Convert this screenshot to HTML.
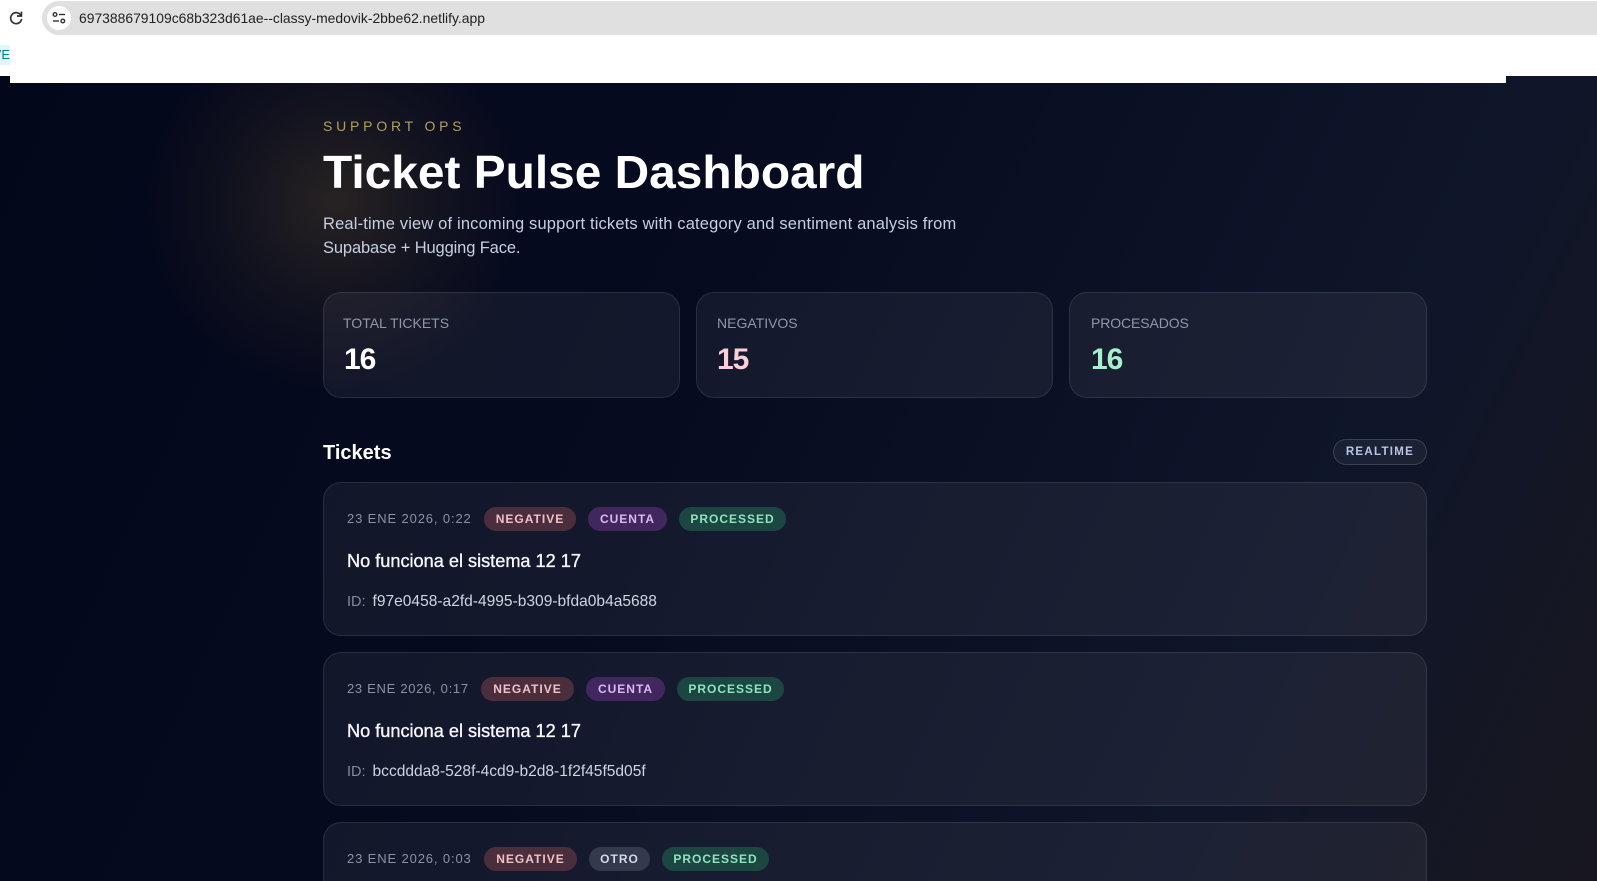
<!DOCTYPE html>
<html><head><meta charset="utf-8"><style>
*{box-sizing:border-box;margin:0;padding:0}
html,body{width:1597px;height:881px;overflow:hidden;background:#fff}
body{position:relative;font-family:"Liberation Sans",sans-serif}
.a{position:absolute;white-space:nowrap}
#bg{position:absolute;left:0;top:76px;width:1597px;height:805px;overflow:hidden;background:radial-gradient(circle at 335px 125px,rgba(250,190,70,.14),rgba(250,190,70,.055) 100px,rgba(250,190,70,0) 190px),linear-gradient(115deg,#03071a 0%,#070b20 42%,#0f162a 78%,#18171f 100%)}
.card{position:absolute;border:1px solid rgba(148,163,184,.17);border-radius:18px;background:rgba(255,255,255,.056)}
.lab{font-size:14px;color:#8f97aa;line-height:18px;left:19px;top:21px}
.num{font-size:30px;font-weight:bold;letter-spacing:-1px;line-height:36px;left:20px;top:49px}
.date{font-size:13px;letter-spacing:.87px;color:#8b92a6;line-height:16px;top:28px;left:23px}
.pill{position:absolute;top:24px;height:24px;border-radius:12px;font-size:12px;font-weight:bold;letter-spacing:1px;line-height:24px;text-align:center;white-space:nowrap}
.neg{background:#4a2e3c;color:#f1c0c8}.cue{background:#42275f;color:#dcb8f2}.pro{background:#1c4642;color:#8fe3bd}.otr{background:#343a4e;color:#d4d9e4}
.tt{left:23px;top:67px;font-size:18.15px;line-height:22px;color:#f5f7fb;-webkit-text-stroke:.35px #f5f7fb}
.id{left:23px;top:110px;font-size:15.55px;line-height:18px;color:#d0d5e0}
.id span{color:#838b9e;font-size:14.5px;margin-right:7px}
</style></head><body>
<div class="a" style="left:42px;top:1px;width:1555px;height:34px;background:#e0e0e0;border-radius:17px 0 0 17px"></div>
<svg class="a" style="left:8px;top:10px" width="16" height="16" viewBox="0 0 16 16" fill="none" stroke="#333" stroke-width="1.7"><path d="M12.8 5.2A5.5 5.5 0 1 0 13.6 9"/><path d="M13.4 1.6V6H9"/></svg>
<div class="a" style="left:47px;top:6px;width:24px;height:24px;border-radius:12px;background:#fff"></div>
<svg class="a" style="left:52px;top:11px" width="14" height="14" viewBox="0 0 14 14" fill="none" stroke="#333" stroke-width="1.4"><circle cx="3" cy="3.5" r="1.8"/><path d="M7 3.5H13"/><circle cx="10.8" cy="10" r="1.8"/><path d="M1 10H7"/></svg>
<div class="a" style="left:79px;top:9px;font-size:13.9px;line-height:18px;color:#222">697388679109c68b323d61ae--classy-medovik-2bbe62.netlify.app</div>

<div id="bg"></div>
<div class="a" style="left:10px;top:35px;width:1496px;height:48px;background:#fff"></div>
<div class="a" style="left:0;top:35px;width:1597px;height:41px;background:#fff"></div>
<div class="a" style="left:0;top:45px;width:10px;height:20px;background:#e0f7fa;color:#00838f;font-size:13px;line-height:20px;overflow:hidden"><span style="position:absolute;right:0">VE</span></div>

<div class="a" style="left:323px;top:117px;font-size:14px;letter-spacing:3.8px;line-height:18px;color:#b39f5c">SUPPORT OPS</div>
<div class="a" style="left:323px;top:145px;font-size:46px;font-weight:bold;line-height:54px;color:#fff;transform:scaleX(1.04);transform-origin:0 50%">Ticket Pulse Dashboard</div>
<div class="a" style="left:323px;top:212px;font-size:16.5px;line-height:24px;color:#c5cfe2"><span style="letter-spacing:.16px">Real-time view of incoming support tickets with category and sentiment analysis from</span><br><span style="letter-spacing:-.13px">Supabase + Hugging Face.</span></div>

<div class="card" style="left:323px;top:292px;width:357px;height:106px"><div class="a lab">TOTAL TICKETS</div><div class="a num" style="color:#fff">16</div></div>
<div class="card" style="left:696px;top:292px;width:357px;height:106px"><div class="a lab" style="left:20px">NEGATIVOS</div><div class="a num" style="color:#fbcfd6">15</div></div>
<div class="card" style="left:1069px;top:292px;width:358px;height:106px"><div class="a lab" style="left:21px;letter-spacing:-.1px">PROCESADOS</div><div class="a num" style="left:21px;color:#a7f0cc">16</div></div>

<div class="a" style="left:323px;top:440px;font-size:20px;font-weight:bold;line-height:26px;color:#fff">Tickets</div>
<div class="a" style="left:1333px;top:439px;width:94px;height:26px;border:1px solid rgba(148,163,184,.25);border-radius:13px;background:rgba(255,255,255,.05);font-size:11.5px;font-weight:bold;letter-spacing:1.3px;line-height:25px;text-align:center;color:#b4c8e6">REALTIME</div>

<div class="card" style="left:323px;top:482px;width:1104px;height:154px">
<div class="a date">23 ENE 2026, 0:22</div>
<div class="pill neg" style="left:160px;width:92px">NEGATIVE</div>
<div class="pill cue" style="left:264px;width:79px">CUENTA</div>
<div class="pill pro" style="left:355px;width:107px">PROCESSED</div>
<div class="a tt">No funciona el sistema 12 17</div>
<div class="a id"><span>ID:</span>f97e0458-a2fd-4995-b309-bfda0b4a5688</div>
</div>
<div class="card" style="left:323px;top:652px;width:1104px;height:154px">
<div class="a date" style="letter-spacing:.7px">23 ENE 2026, 0:17</div>
<div class="pill neg" style="left:157px;width:93px">NEGATIVE</div>
<div class="pill cue" style="left:262px;width:79px">CUENTA</div>
<div class="pill pro" style="left:353px;width:107px">PROCESSED</div>
<div class="a tt">No funciona el sistema 12 17</div>
<div class="a id"><span>ID:</span>bccddda8-528f-4cd9-b2d8-1f2f45f5d05f</div>
</div>
<div class="card" style="left:323px;top:822px;width:1104px;height:59px;border-bottom:0;border-radius:18px 18px 0 0">
<div class="a date">23 ENE 2026, 0:03</div>
<div class="pill neg" style="left:160px;width:93px">NEGATIVE</div>
<div class="pill otr" style="left:265px;width:61px">OTRO</div>
<div class="pill pro" style="left:338px;width:107px">PROCESSED</div>
</div>
</body></html>
